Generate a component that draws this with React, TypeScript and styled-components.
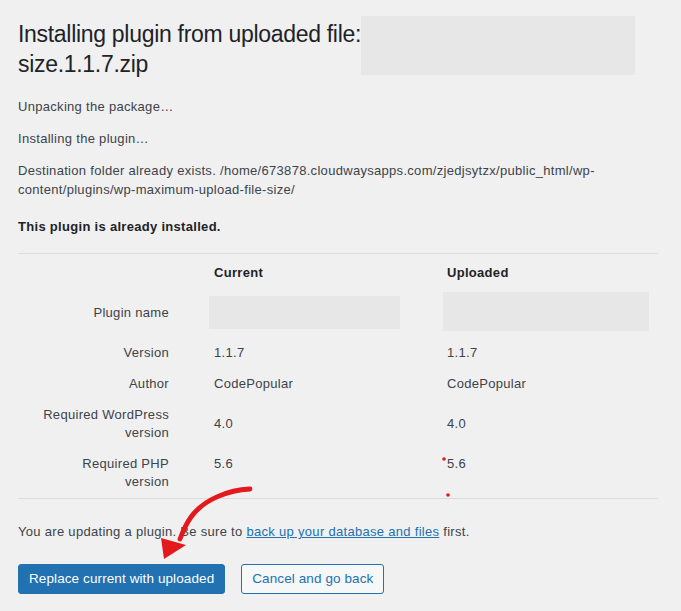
import React from 'react';
import styled, { createGlobalStyle } from 'styled-components';

const GlobalStyle = createGlobalStyle`
  html, body {
    margin: 0;
    padding: 0;
    background: #f0f0f1;
  }
  body {
    font-family: "Liberation Sans", Arial, sans-serif;
    font-size: 13px;
    letter-spacing: 0.3px;
    color: #3c434a;
  }
`;

const rows = [
  { label: 'Version', current: '1.1.7', uploaded: '1.1.7' },
  { label: 'Author', current: 'CodePopular', uploaded: 'CodePopular' },
  { label: 'Required WordPress version', current: '4.0', uploaded: '4.0', valign: 'center' },
  { label: 'Required PHP version', current: '5.6', uploaded: '5.6', valign: 'start' },
];

const App = () => (
  <Page>
    <GlobalStyle />
    <Title>
      <TitleText>
        Installing plugin from uploaded file:
        <br />
        size.1.1.7.zip
      </TitleText>
      <Redact $w={274} $h={59} $dx={0} $dy={-3} />
    </Title>

    <Para>Unpacking the package…</Para>
    <Para>Installing the plugin…</Para>
    <Para>
      Destination folder already exists. /home/673878.cloudwaysapps.com/zjedjsytzx/public_html/wp-content/plugins/wp-maximum-upload-file-size/
    </Para>
    <Para $strong $top={18}>This plugin is already installed.</Para>

    <CompareTable>
      <Row $pad="10px 0 11px">
        <span />
        <HeadCell>Current</HeadCell>
        <HeadCell>Uploaded</HeadCell>
      </Row>
      <Row $height={45}>
        <LabelCell $top={11}>Plugin name</LabelCell>
        <ValueCell>
          <Redact $w={191} $h={33} $dx={-5} $dy={3} />
        </ValueCell>
        <ValueCell>
          <Redact $w={206} $h={39} $dx={-4} $dy={-1} />
        </ValueCell>
      </Row>
      {rows.map((r) => (
        <Row key={r.label} $pad="6px 0 7px">
          <LabelCell>{r.label}</LabelCell>
          <ValueCell $align={r.valign}>{r.current}</ValueCell>
          <ValueCell $align={r.valign}>{r.uploaded}</ValueCell>
        </Row>
      ))}
    </CompareTable>

    <Notice>
      You are updating a plugin. Be sure to <Link href="#">back up your database and files</Link> first.
    </Notice>

    <Actions>
      <Button $primary>Replace current with uploaded</Button>
      <Button>Cancel and go back</Button>
    </Actions>

    <Markup viewBox="0 0 681 611" width="681" height="611">
      <path
        d="M250 489 C229 490 204 499 191 517 C186 524 183 531 180 539"
        fill="none"
        stroke="#e3191c"
        strokeWidth="4.8"
        strokeLinecap="round"
      />
      <polygon points="161,538 186,545 164,559" fill="#e3191c" />
      <circle cx="444" cy="459" r="1.8" fill="#e3191c" />
      <circle cx="448" cy="495" r="1.8" fill="#e3191c" />
    </Markup>
  </Page>
);

const Page = styled.div`
  position: relative;
  width: 681px;
  min-height: 611px;
  box-sizing: border-box;
  padding: 0 23px 0 18px;
  overflow: hidden;
`;

const Title = styled.h1`
  display: flex;
  align-items: flex-start;
  margin: 19px 0 18px;
  font-size: 23px;
  font-weight: 400;
  line-height: 30px;
  letter-spacing: -0.3px;
  color: #1d2327;
`;

const TitleText = styled.span`
  white-space: nowrap;
`;

const Redact = styled.div<{ $w: number; $h: number; $dx: number; $dy: number }>`
  flex: none;
  width: ${(p) => p.$w}px;
  height: ${(p) => p.$h}px;
  margin-left: ${(p) => p.$dx}px;
  margin-top: ${(p) => p.$dy}px;
  background: #e7e7e7;
`;

const Para = styled.p<{ $strong?: boolean; $top?: number }>`
  margin: ${(p) => p.$top ?? 13}px 0 13px;
  line-height: 19px;
  font-weight: ${(p) => (p.$strong ? 700 : 400)};
  color: ${(p) => (p.$strong ? '#1d2327' : '#3c434a')};
`;

const CompareTable = styled.div`
  margin-top: 17px;
  border-top: 1px solid #dcdcde;
  border-bottom: 1px solid #dcdcde;
`;

const Row = styled.div<{ $pad?: string; $height?: number }>`
  display: grid;
  grid-template-columns: 151px 233px 1fr;
  align-items: start;
  padding: ${(p) => p.$pad ?? '0'};
  height: ${(p) => (p.$height ? `${p.$height}px` : 'auto')};
  line-height: 18px;
`;

const HeadCell = styled.div`
  padding-left: 45px;
  font-weight: 700;
  color: #1d2327;
`;

const LabelCell = styled.div<{ $top?: number }>`
  padding: ${(p) => p.$top ?? 0}px 0 0 22px;
  text-align: right;
`;

const ValueCell = styled.div<{ $align?: string }>`
  align-self: ${(p) => p.$align ?? 'start'};
  padding-left: 45px;
`;

const Notice = styled.p`
  margin: 23px 0 0;
  line-height: 19px;
`;

const Link = styled.a`
  color: #2271b1;
  text-decoration: underline;
`;

const Actions = styled.div`
  display: flex;
  gap: 16px;
  margin-top: 23px;
`;

const Button = styled.button<{ $primary?: boolean }>`
  height: 30px;
  padding: 0 10px;
  border-radius: 3px;
  border: 1px solid #2271b1;
  background: ${(p) => (p.$primary ? '#2271b1' : '#f6f7f7')};
  color: ${(p) => (p.$primary ? '#ffffff' : '#2271b1')};
  font-family: "Liberation Sans", Arial, sans-serif;
  font-size: 13.5px;
  letter-spacing: 0.1px;
  line-height: 28px;
  cursor: pointer;
`;

const Markup = styled.svg`
  position: absolute;
  top: 0;
  left: 0;
  pointer-events: none;
`;

export default App;
